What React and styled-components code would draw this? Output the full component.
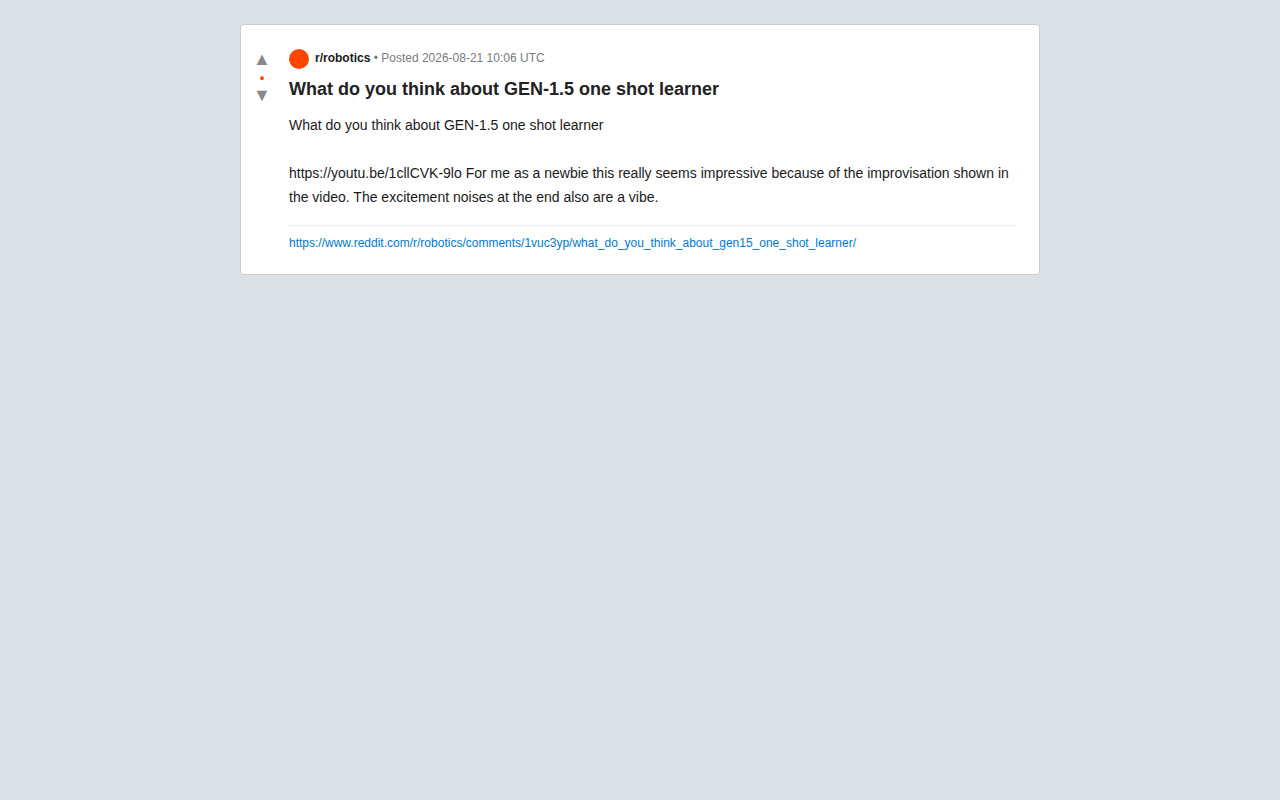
import React from "react";
import styled, { createGlobalStyle } from "styled-components";

const GlobalStyle = createGlobalStyle`
  * { box-sizing: border-box; }
  body {
    margin: 0;
    padding: 24px;
    background: #dae0e6;
    color: #1a1a1b;
    font-family: "Liberation Sans", Arial, sans-serif;
  }
`;

const Card = styled.article`
  display: flex;
  max-width: 800px;
  margin: 0 auto;
  padding: 24px 24px 24px 0;
  background: #fff;
  border: 1px solid #ccc;
  border-radius: 4px;
`;

const Votes = styled.div`
  flex: none;
  display: flex;
  flex-direction: column;
  align-items: center;
  width: 42px;
  margin-right: 6px;
`;

const VoteButton = styled.button`
  padding: 0;
  border: 0;
  background: none;
  color: #878a8c;
  font: 18px/21px "Liberation Sans", "DejaVu Sans", sans-serif;
  cursor: pointer;
`;

const Score = styled.span`
  color: #ff4500;
  font-size: 13px;
  font-weight: 700;
  line-height: 15px;
`;

const Content = styled.div`
  flex: 1;
  min-width: 0;
`;

const Meta = styled.div`
  display: flex;
  align-items: flex-start;
  gap: 6px;
  margin-bottom: 8px;
  color: #787c7e;
  font-size: 12px;
  line-height: 18px;
`;

const Avatar = styled.span`
  flex: none;
  width: 20px;
  height: 20px;
  border-radius: 50%;
  background: #ff4500;
`;

const Subreddit = styled.strong`
  color: #1a1a1b;
`;

const Title = styled.h1`
  margin: 0 0 12px;
  color: #222;
  font-size: 18px;
  line-height: 24px;
`;

const Body = styled.div`
  font-size: 14px;
  line-height: 24px;
  white-space: pre-wrap;
`;

const Footer = styled.footer`
  margin-top: 16px;
  padding-top: 10px;
  border-top: 1px solid #edeff1;
  font-size: 12px;
  line-height: 14px;
`;

const Permalink = styled.a`
  color: #0079d3;
  text-decoration: none;
  overflow-wrap: anywhere;
`;

const url =
  "https://www.reddit.com/r/robotics/comments/1vuc3yp/what_do_you_think_about_gen15_one_shot_learner/";

const body = `What do you think about GEN-1.5 one shot learner

https://youtu.be/1cllCVK-9lo For me as a newbie this really seems impressive because of the improvisation shown in the video. The excitement noises at the end also are a vibe.`;

export default function App() {
  return (
    <>
      <GlobalStyle />
      <Card>
        <Votes>
          <VoteButton aria-label="Upvote">▲</VoteButton>
          <Score>•</Score>
          <VoteButton aria-label="Downvote">▼</VoteButton>
        </Votes>
        <Content>
          <Meta>
            <Avatar />
            <span>
              <Subreddit>r/robotics</Subreddit> • Posted 2026-08-21 10:06 UTC
            </span>
          </Meta>
          <Title>What do you think about GEN-1.5 one shot learner</Title>
          <Body>{body}</Body>
          <Footer>
            <Permalink href={url}>{url}</Permalink>
          </Footer>
        </Content>
      </Card>
    </>
  );
}
